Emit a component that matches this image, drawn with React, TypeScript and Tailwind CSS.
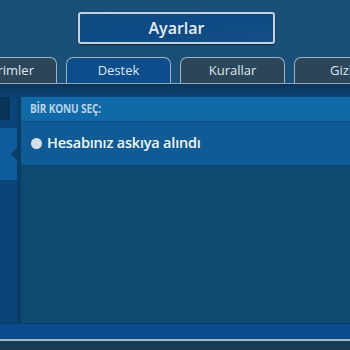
import React from "react";

const font = { fontFamily: '"Open Sans", "Noto Sans", sans-serif' };

function Tab({ label, active, align = "center" }: { label: string; active?: boolean; align?: "center" | "left" | "right" }) {
  return (
    <div
      className={`relative h-[26px] w-[105px] shrink-0 rounded-t-[7px] border-[1.5px] border-b-0 border-[#9fb3c4] flex items-center overflow-hidden ${
        active ? "bg-[#0c4d8c]" : "bg-[#2b4658]"
      } ${align === "right" ? "justify-end pr-[22px]" : align === "left" ? "justify-start pl-[35px]" : "justify-center"}`}
    >
      <span className="text-[13px] text-[#dfe8f0] leading-none whitespace-nowrap">{label}</span>
    </div>
  );
}

export default function App() {
  return (
    <div className="w-[350px] h-[350px] overflow-hidden bg-[#1a5078] flex flex-col" style={font}>
      <div className="pt-[12px] flex justify-center">
        <div className="ml-[3px] w-[197px] h-[32px] rounded-[3px] border-2 border-[#c5d2dc] bg-gradient-to-br from-[#0f4a82] via-[#0d4a85] to-[#154f84] flex items-center justify-center shadow-[0_1px_2px_rgba(0,0,0,0.5)]">
          <span className="text-[16px] font-semibold text-[#e8eef4] leading-none">Ayarlar</span>
        </div>
      </div>

      <div className="mt-[13px] flex gap-[9px] ml-[-48px]">
        <Tab label="Bildirimler" align="right" />
        <Tab label="Destek" active />
        <Tab label="Kurallar" />
        <Tab label="Gizlilik" align="left" />
      </div>

      <div className="h-[14px] bg-gradient-to-b from-[#0a355c] to-[#0c4376] border-t border-[#8ea3b6]"></div>

      <div className="flex h-[226px]">
        <div className="w-[17px] bg-[#0b4478] flex flex-col">
          <div className="w-[10px] h-[23px] bg-[#0a3358] border-r border-b border-[#0a2e50]"></div>
          <div className="h-[8px]"></div>
          <div className="relative h-[52px] bg-[#0e5c9c]">
            <div className="absolute right-0 top-[20px] w-0 h-0 border-y-[6px] border-y-transparent border-r-[6px] border-r-[#0a3d66]"></div>
          </div>
        </div>
        <div className="w-[4px] bg-[#0a3d66]"></div>
        <div className="flex-1 flex flex-col bg-[#0c4a70]">
          <div className="h-[25px] bg-[#106aa8] flex items-center pl-[9px] border-b border-[#0a4f82]">
            <span className="text-[12px] font-bold text-[#b9d3ea] tracking-[-0.2px] scale-x-[0.84] origin-left whitespace-nowrap">
              BİR KONU SEÇ:
            </span>
          </div>
          <div className="h-[44px] bg-[#0f5b95] flex items-center pl-[10px] border-b border-[#0a4268]">
            <div className="w-[11px] h-[11px] rounded-full bg-[#d8dde3]"></div>
            <span className="ml-[5px] text-[14.5px] font-semibold text-[#f4f7fa] leading-none tracking-[-0.2px]">Hesabınız askıya alındı</span>
          </div>
          <div className="flex-1"></div>
        </div>
      </div>

      <div className="h-[16px] bg-[#0a4a8e] border-t border-[#083c70]"></div>
      <div className="h-[2px] bg-[#a6b4c2]"></div>
      <div className="flex-1 bg-[#163d58]"></div>
    </div>
  );
}
